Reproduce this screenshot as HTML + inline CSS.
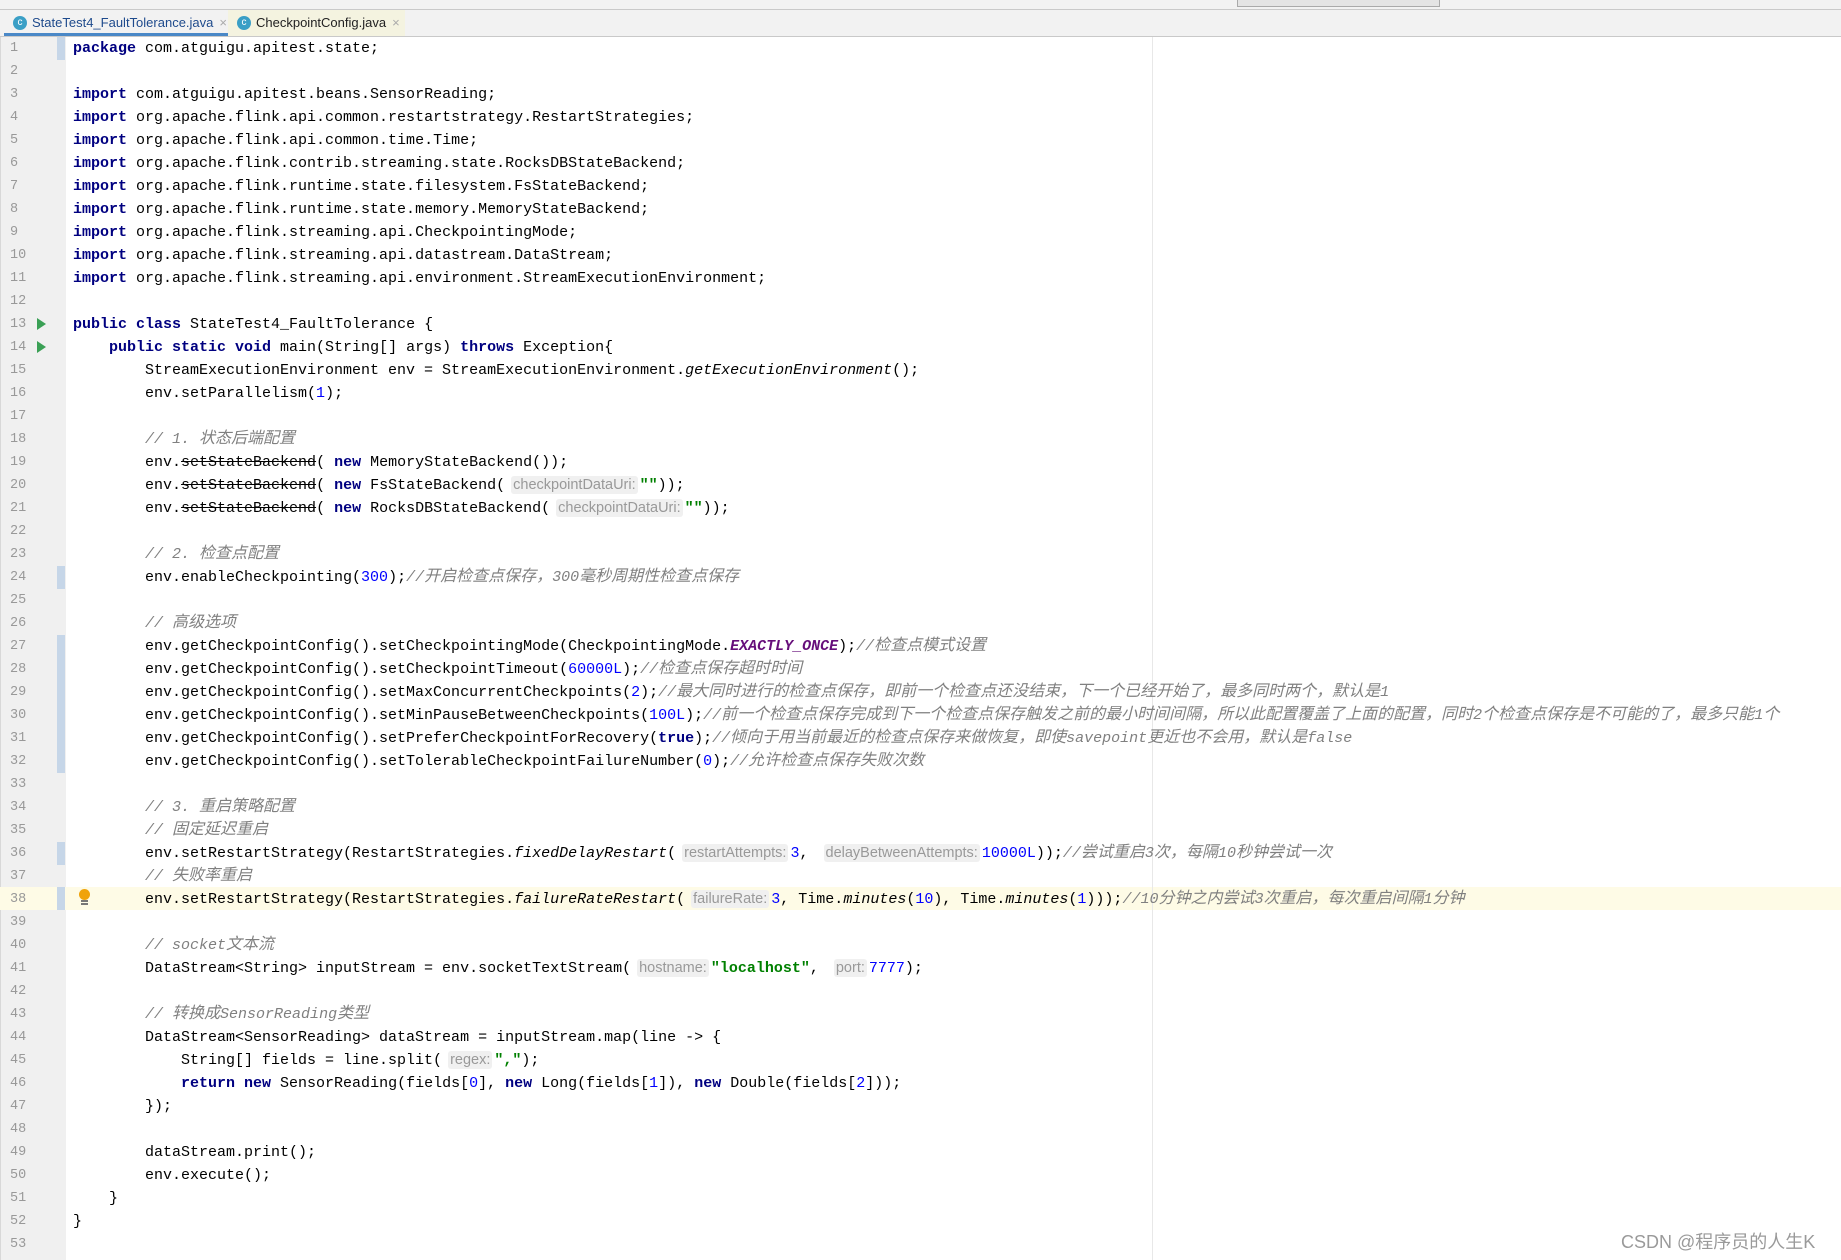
<!DOCTYPE html>
<html><head><meta charset="utf-8">
<style>
*{margin:0;padding:0;box-sizing:border-box}
body{width:1841px;height:1260px;overflow:hidden;background:#fff;position:relative;font-family:"Liberation Mono","Noto Sans CJK SC",monospace}
#top{position:absolute;left:0;top:0;width:1841px;height:10px;background:#f2f2f2;border-bottom:1px solid #c9c9c9}
#tabs{position:absolute;left:0;top:10px;width:1841px;height:27px;background:#f2f2f2;border-bottom:1px solid #c9c9c9}
.tab{position:absolute;top:0;height:26px;font:13px "Liberation Sans",sans-serif;line-height:26px;padding-left:28px;color:#222}
.tab .ic{position:absolute;left:9px;top:6px;width:14px;height:14px;border-radius:50%;background:#3a9fc6;color:#fff;font-size:10px;line-height:14px;text-align:center}
.tab .x{color:#aaa;margin-left:6px}
#gut{position:absolute;left:0;top:37px;width:66px;height:1223px;background:#f0f0f0;border-left:1px solid #d8d8d8}
#margin{position:absolute;left:1152px;top:37px;width:1px;height:1223px;background:#e8e8e8}
.ln{position:absolute;left:10px;width:30px;font-size:13.5px;color:#999;line-height:23px}
.mk{position:absolute;left:57px;width:8px;height:23px;background:#c6d6e8}
#code{position:absolute;left:73px;top:37px;font-size:15px;line-height:23px;white-space:pre;color:#000}
.l{height:23px}
.k{color:#000080;font-weight:bold}
.n{color:#0000ff}
.s{color:#008000;font-weight:bold}
.c{color:#808080;font-style:italic}
.cj{font-size:16px}
.i{font-style:italic}
.st{text-decoration:line-through}
.eo{color:#660e7a;font-weight:bold;font-style:italic}
.h{font-family:"Liberation Sans",sans-serif;font-size:14.5px;color:#999;background:#f0f0f0;border-radius:3px;padding:1px 2px;margin:0 2px 0 6px}
#hl{position:absolute;left:0;top:887px;width:1841px;height:23px;background:#fefbe6}
.run{position:absolute;left:37px;width:0;height:0;border-top:6px solid transparent;border-bottom:6px solid transparent;border-left:9px solid #3aa055}
#wm{position:absolute;left:1621px;top:1228px;font:18px "Liberation Sans","Noto Sans CJK SC",sans-serif;color:#9a9a9a}
</style></head><body>
<div id="top"><div style="position:absolute;left:1237px;top:0;width:203px;height:7px;background:#e4e4e4;border:1px solid #aaa;border-top:none"></div></div>
<div id="tabs">
<div class="tab" style="left:4px;width:224px;background:#f2f2f2;border-bottom:3px solid #4a88c7;color:#1e4a8c"><span class="ic">c</span>StateTest4_FaultTolerance.java<span class="x">×</span></div>
<div class="tab" style="left:228px;width:177px;background:#f4f3e0"><span class="ic">c</span>CheckpointConfig.java<span class="x">×</span></div>
</div>
<div id="gut"></div>
<div id="hl"></div>
<div id="margin"></div>
<div class="mk" style="top:37px"></div>
<div class="mk" style="top:566px"></div>
<div class="mk" style="top:635px;height:138px"></div>
<div class="mk" style="top:842px"></div>
<div class="mk" style="top:887px"></div>
<div class="run" style="top:318px"></div>
<div class="run" style="top:341px"></div>
<div style="position:absolute;left:79px;top:889px;width:11px;height:11px;border-radius:50%;background:#f0a30a"></div>
<div style="position:absolute;left:81px;top:900px;width:7px;height:5px;border-top:2px solid #777;border-bottom:2px solid #777"></div>
<div id="lns"></div>
<div id="code"><div class="l"><span class="k">package</span> com.atguigu.apitest.state;</div><div class="l"></div><div class="l"><span class="k">import</span> com.atguigu.apitest.beans.SensorReading;</div><div class="l"><span class="k">import</span> org.apache.flink.api.common.restartstrategy.RestartStrategies;</div><div class="l"><span class="k">import</span> org.apache.flink.api.common.time.Time;</div><div class="l"><span class="k">import</span> org.apache.flink.contrib.streaming.state.RocksDBStateBackend;</div><div class="l"><span class="k">import</span> org.apache.flink.runtime.state.filesystem.FsStateBackend;</div><div class="l"><span class="k">import</span> org.apache.flink.runtime.state.memory.MemoryStateBackend;</div><div class="l"><span class="k">import</span> org.apache.flink.streaming.api.CheckpointingMode;</div><div class="l"><span class="k">import</span> org.apache.flink.streaming.api.datastream.DataStream;</div><div class="l"><span class="k">import</span> org.apache.flink.streaming.api.environment.StreamExecutionEnvironment;</div><div class="l"></div><div class="l"><span class="k">public class</span> StateTest4_FaultTolerance {</div><div class="l">    <span class="k">public static void</span> main(String[] args) <span class="k">throws</span> Exception{</div><div class="l">        StreamExecutionEnvironment env = StreamExecutionEnvironment.<span class="i">getExecutionEnvironment</span>();</div><div class="l">        env.setParallelism(<span class="n">1</span>);</div><div class="l"></div><div class="l">        <span class="c">// 1. 状态后端配置</span></div><div class="l">        env.<span class="st">setStateBackend</span>( <span class="k">new</span> MemoryStateBackend());</div><div class="l">        env.<span class="st">setStateBackend</span>( <span class="k">new</span> FsStateBackend(<span class="h">checkpointDataUri:</span><span class="s">""</span>));</div><div class="l">        env.<span class="st">setStateBackend</span>( <span class="k">new</span> RocksDBStateBackend(<span class="h">checkpointDataUri:</span><span class="s">""</span>));</div><div class="l"></div><div class="l">        <span class="c">// 2. 检查点配置</span></div><div class="l">        env.enableCheckpointing(<span class="n">300</span>);<span class="c">//开启检查点保存，300毫秒周期性检查点保存</span></div><div class="l"></div><div class="l">        <span class="c">// 高级选项</span></div><div class="l">        env.getCheckpointConfig().setCheckpointingMode(CheckpointingMode.<span class="eo">EXACTLY_ONCE</span>);<span class="c">//检查点模式设置</span></div><div class="l">        env.getCheckpointConfig().setCheckpointTimeout(<span class="n">60000L</span>);<span class="c">//检查点保存超时时间</span></div><div class="l">        env.getCheckpointConfig().setMaxConcurrentCheckpoints(<span class="n">2</span>);<span class="c">//最大同时进行的检查点保存，即前一个检查点还没结束，下一个已经开始了，最多同时两个，默认是1</span></div><div class="l">        env.getCheckpointConfig().setMinPauseBetweenCheckpoints(<span class="n">100L</span>);<span class="c">//前一个检查点保存完成到下一个检查点保存触发之前的最小时间间隔，所以此配置覆盖了上面的配置，同时2个检查点保存是不可能的了，最多只能1个</span></div><div class="l">        env.getCheckpointConfig().setPreferCheckpointForRecovery(<span class="k">true</span>);<span class="c">//倾向于用当前最近的检查点保存来做恢复，即使savepoint更近也不会用，默认是false</span></div><div class="l">        env.getCheckpointConfig().setTolerableCheckpointFailureNumber(<span class="n">0</span>);<span class="c">//允许检查点保存失败次数</span></div><div class="l"></div><div class="l">        <span class="c">// 3. 重启策略配置</span></div><div class="l">        <span class="c">// 固定延迟重启</span></div><div class="l">        env.setRestartStrategy(RestartStrategies.<span class="i">fixedDelayRestart</span>(<span class="h">restartAttempts:</span><span class="n">3</span>, <span class="h">delayBetweenAttempts:</span><span class="n">10000L</span>));<span class="c">//尝试重启3次，每隔10秒钟尝试一次</span></div><div class="l">        <span class="c">// 失败率重启</span></div><div class="l">        env.setRestartStrategy(RestartStrategies.<span class="i">failureRateRestart</span>(<span class="h">failureRate:</span><span class="n">3</span>, Time.<span class="i">minutes</span>(<span class="n">10</span>), Time.<span class="i">minutes</span>(<span class="n">1</span>)));<span class="c">//10分钟之内尝试3次重启，每次重启间隔1分钟</span></div><div class="l"></div><div class="l">        <span class="c">// socket文本流</span></div><div class="l">        DataStream&lt;String&gt; inputStream = env.socketTextStream(<span class="h">hostname:</span><span class="s">"localhost"</span>, <span class="h">port:</span><span class="n">7777</span>);</div><div class="l"></div><div class="l">        <span class="c">// 转换成SensorReading类型</span></div><div class="l">        DataStream&lt;SensorReading&gt; dataStream = inputStream.map(line -&gt; {</div><div class="l">            String[] fields = line.split(<span class="h">regex:</span><span class="s">","</span>);</div><div class="l">            <span class="k">return new</span> SensorReading(fields[<span class="n">0</span>], <span class="k">new</span> Long(fields[<span class="n">1</span>]), <span class="k">new</span> Double(fields[<span class="n">2</span>]));</div><div class="l">        });</div><div class="l"></div><div class="l">        dataStream.print();</div><div class="l">        env.execute();</div><div class="l">    }</div><div class="l">}</div><div class="l"></div></div>
<div id="wm">CSDN @程序员的人生K</div>
<script>
var h='';for(var i=1;i<=53;i++){h+='<div class="ln" style="top:'+(37+(i-1)*23)+'px">'+i+'</div>'}
document.getElementById('lns').innerHTML=h;
document.querySelectorAll('.c').forEach(function(e){e.innerHTML=e.innerHTML.replace(/([\u3000-\u9fff\uff00-\uffef]+)/g,'<span class="cj">$1</span>')});
</script>
</body></html>
